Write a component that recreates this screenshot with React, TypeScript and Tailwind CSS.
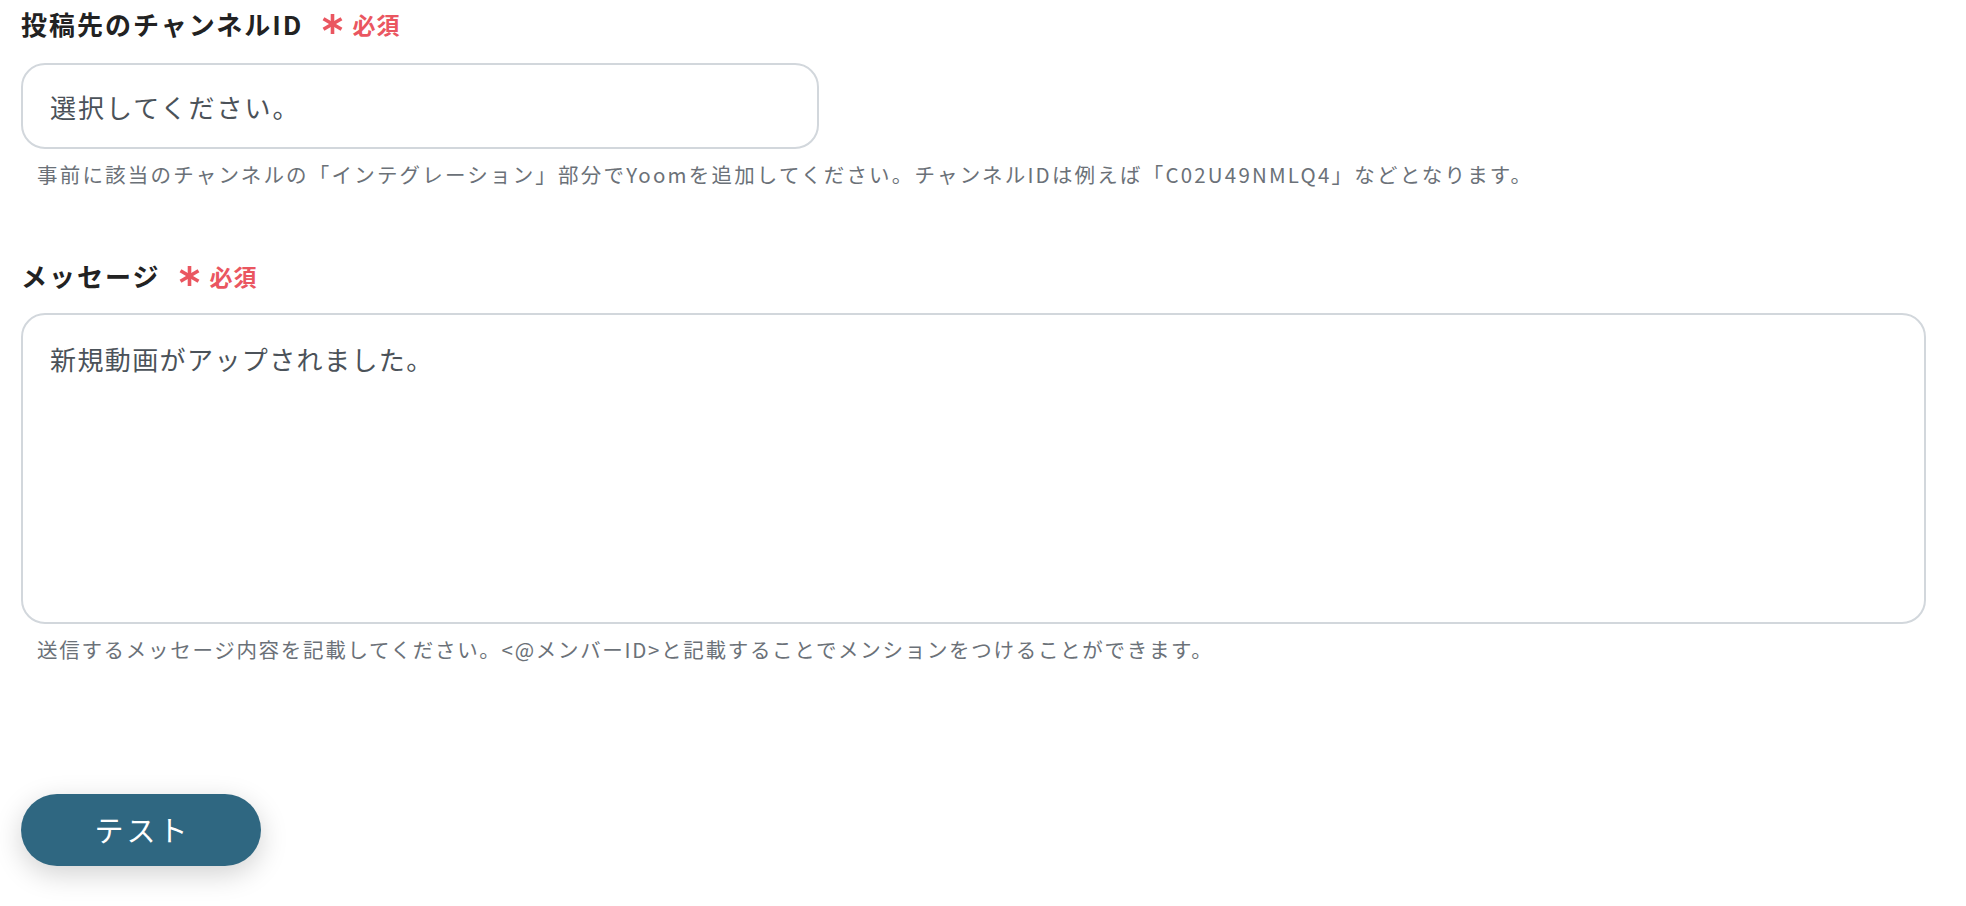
import React from 'react';

const font = { fontFamily: '"Noto Sans CJK JP", "Noto Sans", sans-serif' };

// 必須マーク
const RequiredMark: React.FC = () => (
  <span className="ml-[18px] inline-flex items-center gap-[8px] text-[#ea5660]">
    <svg width="23" height="22" viewBox="0 0 23 22" className="shrink-0">
      <g stroke="currentColor" strokeWidth="3.6" strokeLinecap="butt">
        <line x1="11.5" y1="1" x2="11.5" y2="21" />
        <line x1="2.5" y1="5.8" x2="20.5" y2="16.2" />
        <line x1="2.5" y1="16.2" x2="20.5" y2="5.8" />
      </g>
    </svg>
    <span className="text-[23px] font-bold leading-[36px] tracking-[1px]">必須</span>
  </span>
);

const FieldLabel: React.FC<{ text: string }> = ({ text }) => (
  <div className="flex items-center h-[36px]">
    <span className="text-[26px] font-bold leading-[36px] tracking-[2px] text-[#222222]">{text}</span>
    <RequiredMark />
  </div>
);

const HelpText: React.FC<{ text: string; className?: string }> = ({ text, className }) => (
  <p className={`mt-[10px] pl-[16px] text-[20.5px] leading-[30px] text-[#6b7178] ${className ?? ''}`}>{text}</p>
);

export default function App() {
  return (
    <div className="min-h-[906px] w-full bg-white pl-[21px] pr-[40px] pt-[6px]" style={font}>
      <FieldLabel text="投稿先のチャンネルID" />
      <input
        type="text"
        placeholder="選択してください。"
        className="mt-[21px] block h-[86px] w-[798px] rounded-[24px] border-2 border-[#d2d7dc] bg-white px-[27px] text-[26px] tracking-[2px] text-[#4b5259] outline-none placeholder:text-[#4b5259]"
        style={font}
      />
      <HelpText
        className="tracking-[2.2px]"
        text="事前に該当のチャンネルの「インテグレーション」部分でYoomを追加してください。チャンネルIDは例えば「C02U49NMLQ4」などとなります。"
      />

      <div className="mt-[69px]">
        <FieldLabel text="メッセージ" />
      </div>
      <textarea
        defaultValue="新規動画がアップされました。"
        className="mt-[19px] block h-[311px] w-[1905px] resize-none rounded-[24px] border-2 border-[#d2d7dc] bg-white px-[27px] pt-[25px] text-[26px] leading-[38px] tracking-[1.4px] text-[#4b5259] outline-none"
        style={font}
      />
      <HelpText
        className="tracking-[1.7px]"
        text="送信するメッセージ内容を記載してください。<@メンバーID>と記載することでメンションをつけることができます。"
      />

      <button
        type="button"
        className="mt-[130px] flex h-[72px] w-[240px] items-center justify-center rounded-full bg-[#2f6781] pl-[3px] text-[29px] tracking-[3px] text-white shadow-[0_8px_28px_rgba(0,0,0,0.18)]"
        style={font}
      >
        テスト
      </button>
    </div>
  );
}
